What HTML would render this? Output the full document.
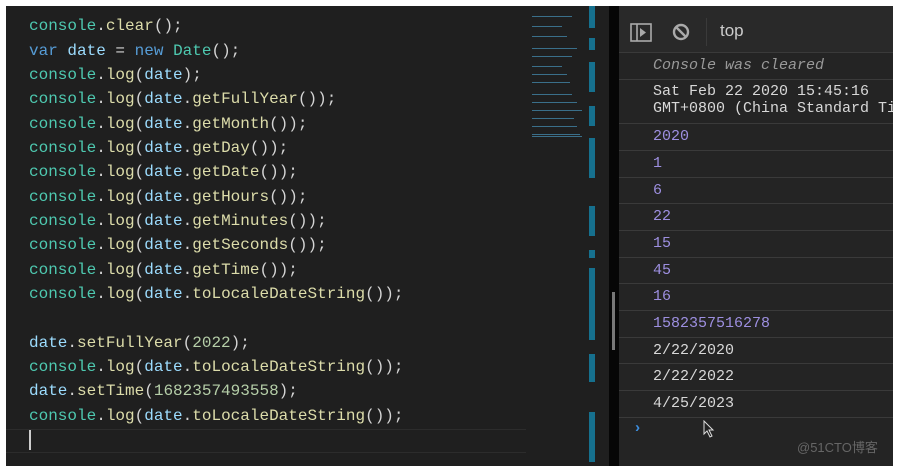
<!DOCTYPE html>
<html><head><meta charset="utf-8"><style>
*{margin:0;padding:0;box-sizing:border-box}
body{width:903px;height:473px;background:#fff;position:relative;overflow:hidden;font-family:"Liberation Mono",monospace}
#ed{position:absolute;left:6px;top:6px;width:603px;height:460px;background:#1f1f1f;overflow:hidden}
#bar{position:absolute;left:609px;top:6px;width:10px;height:460px;background:#060606}
#con{position:absolute;left:619px;top:6px;width:274px;height:460px;background:#242424;overflow:hidden}
.l{position:absolute;left:23px;font-size:16px;white-space:pre;color:#d4d4d4}
.c{color:#4ec9b0}.f{color:#dcdcaa}.v{color:#9cdcfe}.k{color:#569cd6}.n{color:#b5cea8}
.r{position:absolute;left:0;width:274px;border-top:1px solid #3a3a3a;font-size:15px;color:#d8d8d8;padding-left:34px;white-space:pre}
.p{color:#9d8fe0}
.mm{position:absolute;background:#3a6f8a;height:1px}
.sc{position:absolute;left:583px;width:6px;background:#16708e}
</style></head><body>
<div id="ed">
<div class="l" style="top:-13px;color:#6a9955">//Date</div>
<div class="l" style="top:11px"><span class="c">console</span>.<span class="f">clear</span>();</div>
<div class="l" style="top:36px"><span class="k">var</span> <span class="v">date</span> = <span class="k">new</span> <span class="c">Date</span>();</div>
<div class="l" style="top:60px"><span class="c">console</span>.<span class="f">log</span>(<span class="v">date</span>);</div>
<div class="l" style="top:84px"><span class="c">console</span>.<span class="f">log</span>(<span class="v">date</span>.<span class="f">getFullYear</span>());</div>
<div class="l" style="top:109px"><span class="c">console</span>.<span class="f">log</span>(<span class="v">date</span>.<span class="f">getMonth</span>());</div>
<div class="l" style="top:133px"><span class="c">console</span>.<span class="f">log</span>(<span class="v">date</span>.<span class="f">getDay</span>());</div>
<div class="l" style="top:157px"><span class="c">console</span>.<span class="f">log</span>(<span class="v">date</span>.<span class="f">getDate</span>());</div>
<div class="l" style="top:182px"><span class="c">console</span>.<span class="f">log</span>(<span class="v">date</span>.<span class="f">getHours</span>());</div>
<div class="l" style="top:206px"><span class="c">console</span>.<span class="f">log</span>(<span class="v">date</span>.<span class="f">getMinutes</span>());</div>
<div class="l" style="top:230px"><span class="c">console</span>.<span class="f">log</span>(<span class="v">date</span>.<span class="f">getSeconds</span>());</div>
<div class="l" style="top:255px"><span class="c">console</span>.<span class="f">log</span>(<span class="v">date</span>.<span class="f">getTime</span>());</div>
<div class="l" style="top:279px"><span class="c">console</span>.<span class="f">log</span>(<span class="v">date</span>.<span class="f">toLocaleDateString</span>());</div>
<div class="l" style="top:328px"><span class="v">date</span>.<span class="f">setFullYear</span>(<span class="n">2022</span>);</div>
<div class="l" style="top:352px"><span class="c">console</span>.<span class="f">log</span>(<span class="v">date</span>.<span class="f">toLocaleDateString</span>());</div>
<div class="l" style="top:376px"><span class="v">date</span>.<span class="f">setTime</span>(<span class="n">1682357493558</span>);</div>
<div class="l" style="top:401px"><span class="c">console</span>.<span class="f">log</span>(<span class="v">date</span>.<span class="f">toLocaleDateString</span>());</div>
<div style="position:absolute;left:0;top:423px;width:520px;height:24px;border-top:1px solid #2c2c2c;border-bottom:1px solid #2c2c2c"></div>
<div style="position:absolute;left:23px;top:424px;width:2px;height:20px;background:#ccc"></div>
<div class="mm" style="left:526px;top:10px;width:40px"></div><div class="mm" style="left:526px;top:20px;width:30px"></div>
<div class="mm" style="left:526px;top:30px;width:35px"></div><div class="mm" style="left:526px;top:42px;width:45px"></div>
<div class="mm" style="left:526px;top:50px;width:40px"></div><div class="mm" style="left:526px;top:60px;width:30px"></div>
<div class="mm" style="left:526px;top:68px;width:35px"></div><div class="mm" style="left:526px;top:76px;width:38px"></div>
<div class="mm" style="left:526px;top:88px;width:40px"></div><div class="mm" style="left:526px;top:96px;width:45px"></div>
<div class="mm" style="left:526px;top:104px;width:50px"></div><div class="mm" style="left:526px;top:112px;width:42px"></div>
<div class="mm" style="left:526px;top:120px;width:45px"></div><div class="mm" style="left:526px;top:128px;width:48px"></div>
<div class="mm" style="left:526px;top:130px;width:50px"></div>
<div class="sc" style="top:0;height:22px"></div><div class="sc" style="top:32px;height:12px"></div>
<div class="sc" style="top:56px;height:30px"></div><div class="sc" style="top:100px;height:20px"></div>
<div class="sc" style="top:132px;height:40px"></div><div class="sc" style="top:200px;height:30px"></div>
<div class="sc" style="top:244px;height:8px"></div><div class="sc" style="top:262px;height:72px"></div>
<div class="sc" style="top:348px;height:28px"></div><div class="sc" style="top:406px;height:30px"></div>
<div class="sc" style="top:418px;height:38px"></div>
</div>
<div id="bar"><div style="position:absolute;left:3px;top:286px;width:3px;height:58px;background:#777"></div></div>
<div id="con">
<div style="position:absolute;left:0;top:0;width:274px;height:46px;background:#292929"></div>
<svg style="position:absolute;left:11px;top:17px" width="24" height="20" viewBox="0 0 24 20"><rect x="1" y="1" width="20" height="17" fill="none" stroke="#aaa" stroke-width="1.6"/><line x1="7" y1="1" x2="7" y2="18" stroke="#aaa" stroke-width="1.6"/><path d="M10 5l6 4.5-6 4.5z" fill="#aaa"/></svg>
<svg style="position:absolute;left:53px;top:17px" width="20" height="20" viewBox="0 0 20 20"><circle cx="9" cy="9" r="7" fill="none" stroke="#aaa" stroke-width="2.4"/><line x1="4" y1="4" x2="14" y2="14" stroke="#aaa" stroke-width="2.4"/></svg>
<div style="position:absolute;left:87px;top:12px;width:1px;height:28px;background:#3a3a3a"></div>
<div style="position:absolute;left:101px;top:15px;font-family:'Liberation Sans',sans-serif;font-size:17px;color:#ccc">top</div>
<div class="r" style="top:46px;height:27px;padding-top:4px;color:#999;font-style:italic">Console was cleared</div>
<div class="r" style="top:73px;height:44px;padding-top:3px;line-height:17px">Sat Feb 22 2020 15:45:16
GMT+0800 (China Standard Time)</div>
<div class="r p" style="top:117px;height:27px;padding-top:4px">2020</div>
<div class="r p" style="top:144px;height:27px;padding-top:4px">1</div>
<div class="r p" style="top:171px;height:27px;padding-top:4px">6</div>
<div class="r p" style="top:197px;height:27px;padding-top:4px">22</div>
<div class="r p" style="top:224px;height:27px;padding-top:4px">15</div>
<div class="r p" style="top:251px;height:27px;padding-top:4px">45</div>
<div class="r p" style="top:277px;height:27px;padding-top:4px">16</div>
<div class="r p" style="top:304px;height:27px;padding-top:4px">1582357516278</div>
<div class="r" style="top:331px;height:27px;padding-top:4px">2/22/2020</div>
<div class="r" style="top:357px;height:27px;padding-top:4px">2/22/2022</div>
<div class="r" style="top:384px;height:27px;padding-top:4px">4/25/2023</div>
<div class="r" style="top:411px;height:50px"></div>
<div style="position:absolute;left:14px;top:414px;color:#3d8fe0;font-size:15px;font-weight:bold">›</div>
<svg style="position:absolute;left:84px;top:414px" width="14" height="18" viewBox="0 0 14 18"><path d="M1 1v13l3-3 3 6 2-1-3-6h4z" fill="#222" stroke="#ddd" stroke-width="1"/></svg>
<div style="position:absolute;left:178px;top:431px;font-family:'Liberation Sans','Noto Sans CJK SC',sans-serif;font-size:13px;color:#666">@51CTO博客</div>
</div>
</body></html>
